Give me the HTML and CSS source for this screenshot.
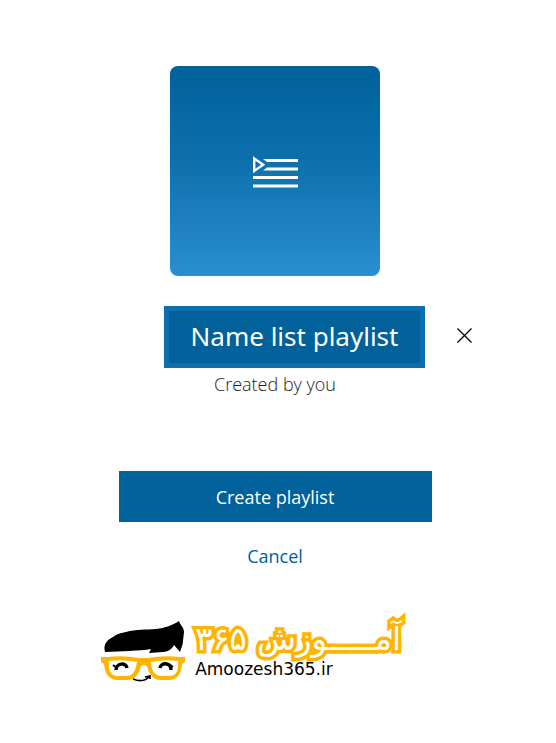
FILE: index.html
```html
<!DOCTYPE html>
<html lang="en">

<head>
    <meta charset="UTF-8">
    <meta name="viewport" content="width=device-width, initial-scale=1.0">
    <title>Create playlist</title>
    <link rel="stylesheet" href="styles.css">
</head>

<body>
    <main class="dialog">
        <form class="playlist-form">
            <div class="cover">
                <svg class="cover-icon" viewBox="0 0 44 34" aria-hidden="true">
                    <path d="M10 5H45V8H14Z M10 16.5L14 13.5H45V16.5Z M0 22H45V25H0Z M0 30.4H45V33.6H0Z" fill="#fff" />
                    <path d="M1.2 4.5V17L10.2 10.7Z" fill="none" stroke="#fff" stroke-width="2.4" />
                </svg>
            </div>
            <div class="name-row">
                <input class="name-input" type="text" value="Name list playlist" aria-label="Playlist name">
                <button class="clear-button" type="button" aria-label="Clear name">
                    <svg viewBox="0 0 15 15" aria-hidden="true">
                        <path d="M0.5 0.5L14.5 14.5M14.5 0.5L0.5 14.5" stroke="#000" stroke-width="1.3" />
                    </svg>
                </button>
            </div>
            <p class="author">Created by you</p>
            <button class="create-button" type="button">Create playlist</button>
            <button class="cancel-button" type="button">Cancel</button>
        </form>
        <footer class="brand">
            <svg class="brand-face" viewBox="0 0 86 64" aria-hidden="true">
                <!-- hair -->
                <path d="M4 32C2 24 6 20 12 17C17 13 21 13 25 12C35 9 45 10 55 9C64 8 72 5 78 1C79 5 83 7 83 12L82 21C82 25 80 28 79 32L73 25C71 29 67 32 62 32L48 33L50 29C38 31 20 31 4 32Z" fill="#000" />
                <!-- glasses -->
                <path fill="#ffb400" fill-rule="evenodd" d="M0 37H7Q22 35 38 38H47Q63 35 78 37H84V42L81 44C80 55 76 60 68 60H60C52 60 48 54 46 46Q43 44 40 46C38 54 34 60 26 60H17C9 60 4 55 3 44L0 42ZM8 41C7 51 10 56 17 56H26C32 56 35 50 36 42Q22 39 8 41ZM50 42C50 50 54 56 60 56H68C75 56 78 51 77 41Q63 39 50 42Z" />
                <!-- eyes and smile -->
                <path d="M15 50C15 43 25 42 26 48M59 48C60 42 70 42 70 50" fill="none" stroke="#000" stroke-width="3.4" />
                <path d="M12 45L16 48M68 44L72 47" fill="none" stroke="#000" stroke-width="2" />
                <path d="M32 59Q42 63 48 57M44 57L49 56L49 59" fill="none" stroke="#000" stroke-width="1.6" />
            </svg>
            <div class="brand-text">
                <span class="brand-name" lang="fa" dir="rtl">آمـــــوزش ۳۶۵</span>
                <span class="brand-site">Amoozesh365.ir</span>
            </div>
        </footer>
    </main>
</body>

</html>
```
FILE: styles.css
```css
body {
    margin: 0;
    background: #fff;
    color: #222;
    font-family: "Open Sans", "Noto Sans", sans-serif;
}

.dialog {
    padding: 66px 6px 32px 0;
}

.playlist-form {
    display: flex;
    flex-direction: column;
    align-items: center;
}

.cover {
    display: flex;
    justify-content: center;
    align-items: center;
    width: 210px;
    height: 210px;
    border-radius: 8px;
    background: linear-gradient(#00619b, #0d70ad 45%, #2a8fd0);
}

.cover-icon {
    width: 44px;
    height: 34px;
    overflow: visible;
}

.name-row {
    display: flex;
    align-items: center;
    gap: 32px;
    margin-top: 30px;
    padding-left: 86px;
}

.name-input {
    box-sizing: border-box;
    width: 261px;
    height: 62px;
    padding: 0 0 2px;
    border: 5px solid #0d6fad;
    background: #00619b;
    color: #fff;
    font-family: "Noto Sans", sans-serif;
    font-size: 26px;
    text-align: center;
    outline: none;
}

.clear-button {
    padding: 0 0 4px;
    border: none;
    background: none;
    cursor: pointer;
}

.clear-button svg {
    display: block;
    width: 15px;
    height: 15px;
}

.author {
    margin: 3px 0 0;
    font-size: 18px;
    font-weight: 300;
    line-height: 26px;
}

.create-button,
.cancel-button {
    border: none;
    font-family: "Open Sans", "Noto Sans", sans-serif;
    font-size: 18px;
    cursor: pointer;
}

.create-button {
    width: 313px;
    height: 51px;
    margin-top: 74px;
    background: #00619b;
    color: #fff;
}

.cancel-button {
    margin-top: 16px;
    padding: 4px 16px;
    background: none;
    color: #00619b;
    line-height: 28px;
}

.brand {
    display: flex;
    justify-content: center;
    gap: 8px;
    margin-top: 46px;
    padding-right: 48px;
}

.brand-face {
    width: 86px;
    height: 64px;
}

.brand-text {
    display: flex;
    flex-direction: column;
    align-items: flex-start;
}

.brand-name {
    color: #fff;
    font-family: "DejaVu Sans", sans-serif;
    font-size: 32px;
    line-height: 38px;
    white-space: nowrap;
    -webkit-text-stroke: 7px #ffb400;
    paint-order: stroke fill;
}

.brand-site {
    color: #000;
    font-family: "DejaVu Sans", sans-serif;
    font-size: 17px;
    line-height: 22px;
}
```
